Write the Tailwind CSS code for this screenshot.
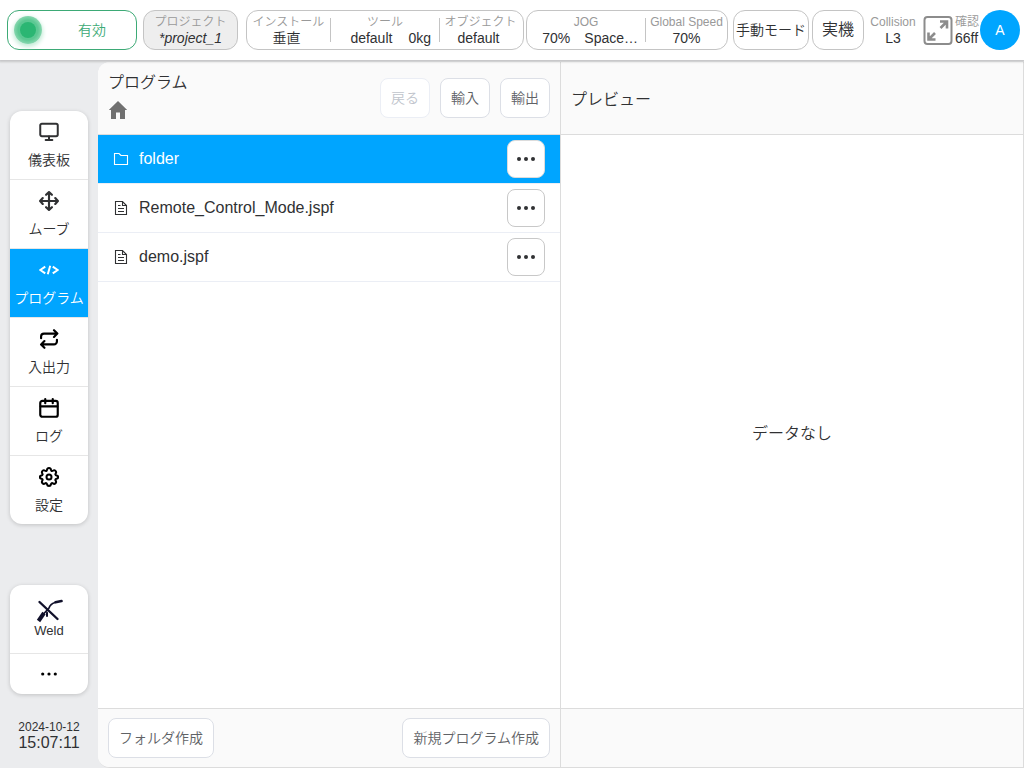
<!DOCTYPE html>
<html lang="ja">
<head>
    <meta charset="UTF-8">
    <meta name="viewport" content="width=device-width, initial-scale=1.0">
    <title>プログラム</title>
    <script src="https://cdn.jsdelivr.net/npm/@tailwindcss/browser@4"></script>
</head>
<body class="flex h-screen flex-col overflow-hidden bg-[#ebecee] font-['Liberation_Sans','Noto_Sans_CJK_JP',sans-serif] text-sm font-[350] text-[#303133]">
    <!-- top bar -->
    <header class="relative z-10 flex h-[60px] shrink-0 items-center bg-white pl-[7px] pr-1 leading-4 whitespace-nowrap shadow-[0_1px_2px_1px_rgba(0,0,0,0.16)]">
        <button class="flex h-10 w-[130px] items-center rounded-xl border border-[#3daa76] pl-1.5 text-[#3daa76]">
            <span class="flex size-7 items-center justify-center rounded-full bg-radial from-[#5cc893] from-50% to-[#8fdab5] to-75% shadow-[0_2px_4px_1px_#c5ecd8]">
                <span class="size-4 rounded-full bg-[#2bb673]"></span>
            </span>
            <span class="flex-1 pl-1.5">有効</span>
        </button>
        <button class="ml-1.5 h-10 w-[95px] rounded-xl border border-[#c4c4c4] bg-[#eeeeee] text-center">
            <span class="block text-xs leading-4 text-[#999999]">プロジェクト</span>
            <span class="block leading-4 italic">*project_1</span>
        </button>
        <div class="ml-2 flex h-10 w-[278px] items-center rounded-xl border border-[#c4c4c4] text-center">
            <div class="w-[83px]">
                <div class="text-xs leading-4 text-[#999999]">インストール</div>
                <div class="pr-1">垂直</div>
            </div>
            <div class="h-6 w-px bg-[#c4c4c4]"></div>
            <div class="w-[108px]">
                <div class="text-xs leading-4 text-[#999999]">ツール</div>
                <div class="flex justify-end gap-4 pr-2"><span>default</span><span>0kg</span></div>
            </div>
            <div class="h-6 w-px bg-[#c4c4c4]"></div>
            <div class="flex-1 pr-0.5">
                <div class="text-xs leading-4 text-[#999999]">オブジェクト</div>
                <div class="pr-1">default</div>
            </div>
        </div>
        <div class="ml-0.5 flex h-10 w-[202px] items-center rounded-xl border border-[#c4c4c4] text-center">
            <div class="w-[118px]">
                <div class="text-xs leading-4 text-[#999999]">JOG</div>
                <div class="flex justify-end gap-3.5 pr-[7px]"><span>70%</span><span>Space…</span></div>
            </div>
            <div class="h-6 w-px bg-[#c4c4c4]"></div>
            <div class="flex-1">
                <div class="text-xs leading-4 text-[#999999]">Global Speed</div>
                <div>70%</div>
            </div>
        </div>
        <button class="ml-[5px] h-10 w-[76px] rounded-xl border border-[#c4c4c4]">手動モード</button>
        <button class="ml-[3px] h-10 w-[52px] rounded-xl border border-[#c4c4c4] text-base">実機</button>
        <div class="ml-1.5 w-[46px] text-center">
            <div class="text-xs leading-4 text-[#999999]">Collision</div>
            <div>L3</div>
        </div>
        <button class="ml-[7px]" aria-label="全画面">
            <svg class="size-[30px]" viewBox="0 0 30 30" fill="none" stroke="#8c8c8c" stroke-width="2">
                <rect x="1.500" y="2" width="27" height="27" rx="3"/>
                <path d="M17 6.500h7v7M24 6.500l-6.500 6.500M5.500 17.500v7h7M5.500 24.500l6.500-6.500" stroke-width="2.600"/>
            </svg>
        </button>
        <div class="ml-0.5 w-6">
            <div class="text-xs leading-4 text-[#999999]">確認</div>
            <div>66ff</div>
        </div>
        <button class="ml-auto size-10 shrink-0 rounded-full bg-[#00a5ff] text-white">A</button>
    </header>

    <div class="flex min-h-0 flex-1 pt-0.5">
        <!-- side menu -->
        <aside class="flex w-[98px] shrink-0 flex-col items-center text-center">
            <nav class="mt-[49px] w-[78px] divide-y divide-[#e6e6e6] overflow-hidden rounded-xl bg-white leading-5 shadow-[0_1px_4px_rgba(0,0,0,0.18)]">
                <a href="#" class="flex h-[69px] flex-col items-center gap-2 pt-[11px]">
                    <svg class="size-5" viewBox="0 0 24 24" fill="none" stroke="currentColor" stroke-width="2.400" stroke-linecap="round" stroke-linejoin="round"><rect x="1.500" y="2" width="21" height="15" rx="2"/><path d="M12 17.500v4M8 21.500h8"/></svg>
                    儀表板
                </a>
                <a href="#" class="flex h-[69px] flex-col items-center gap-2 pt-[11px]">
                    <svg class="size-5" viewBox="0 0 24 24" fill="none" stroke="currentColor" stroke-width="2.600" stroke-linecap="round" stroke-linejoin="round"><path d="M12 1.500v21M1.500 12h21M8.500 4.500 12 1.300l3.500 3.200M8.500 19.500 12 22.700l3.500-3.200M4.500 8.500 1.300 12l3.200 3.500M19.500 8.500l3.200 3.500-3.200 3.500"/></svg>
                    ムーブ
                </a>
                <a href="#" class="flex h-[69px] flex-col items-center gap-2 bg-[#00a5ff] pt-[11px] text-white">
                    <svg class="size-5" viewBox="0 0 24 24" fill="none" stroke="currentColor" stroke-width="2.400"><path d="M7.500 8 1.500 12l6 4M16.500 8l6 4-6 4M13.500 7l-3 10"/></svg>
                    プログラム
                </a>
                <a href="#" class="flex h-[69px] flex-col items-center gap-2 pt-[11px]">
                    <svg class="size-5" viewBox="0 0 24 24" fill="none" stroke="#000" stroke-width="2.600" stroke-linecap="round" stroke-linejoin="round"><path d="m18 1.500 4 4-4 4M2.500 11V9A3.500 3.500 0 0 1 6 5.500h15M6.500 22.500l-4-4 4-4M21.500 13v2a3.500 3.500 0 0 1-3.500 3.500H3"/></svg>
                    入出力
                </a>
                <a href="#" class="flex h-[69px] flex-col items-center gap-2 pt-[11px]">
                    <svg class="size-5" viewBox="0 0 24 24" fill="none" stroke="#000" stroke-width="2.600" stroke-linecap="round" stroke-linejoin="round"><rect x="1.500" y="3.500" width="21" height="19" rx="2.500"/><path d="M2 10h20M7.500 1.300v5M16.500 1.300v5"/></svg>
                    ログ
                </a>
                <a href="#" class="flex h-[68px] flex-col items-center gap-2 pt-[11px]">
                    <svg class="size-5" viewBox="0 0 24 24" fill="none" stroke="#000" stroke-width="2.400" stroke-linejoin="round"><circle cx="12" cy="12" r="3"/><path d="M12 1.300c1.800 0 2.200.8 2.400 2.200.2 1.300 1.300 1.700 2.300 1 1.200-.8 2-.9 3.100.2s1 2 .2 3.100c-.7 1-.3 2.100 1 2.300 1.300.2 2 .6 2 2s-.7 1.800-2 2c-1.300.2-1.700 1.300-1 2.300.8 1.200.9 2-.2 3.100s-2 1-3.100.2c-1-.7-2.100-.3-2.300 1-.2 1.300-.6 2-2.400 2s-2.200-.7-2.400-2c-.2-1.300-1.300-1.700-2.300-1-1.200.8-2 .9-3.100-.2s-1-2-.2-3.100c.7-1 .3-2.100-1-2.300-1.300-.2-2-.6-2-2s.7-1.800 2-2c1.300-.2 1.700-1.300 1-2.300-.8-1.200-.9-2 .2-3.100s2-1 3.100-.2c1 .7 2.100.3 2.300-1 .2-1.400.6-2.200 2.400-2.200z"/></svg>
                    設定
                </a>
            </nav>
            <nav class="mt-[61px] w-[78px] divide-y divide-[#e6e6e6] rounded-xl bg-white shadow-[0_1px_4px_rgba(0,0,0,0.18)]">
                <a href="#" class="flex h-[69px] flex-col items-center pt-3 leading-4">
                    <svg class="h-[26px] w-7" viewBox="0 0 28 26" fill="none" stroke="#11112b" stroke-linecap="round"><path d="m4.500 5 18 17" stroke-width="2.400"/><path d="M3.500 24 9 16" stroke-width="4" stroke-linecap="butt"/><path d="M8 17.500 14 11C15 8 17 6.500 20 5.500" stroke-width="1.700"/><path d="m20.500 5.300 6-1.300" stroke-width="2.600"/><path d="M12 19v-3.500" stroke-width="2"/></svg>
                    <span class="text-[13px] leading-4">Weld</span>
                </a>
                <button class="flex h-10 w-full items-center justify-center" aria-label="その他">
                    <svg class="h-1 w-4" viewBox="0 0 16 4"><circle cx="1.700" cy="2" r="1.600"/><circle cx="8" cy="2" r="1.600"/><circle cx="14.300" cy="2" r="1.600"/></svg>
                </button>
            </nav>
            <div class="mt-auto pb-[17px]">
                <div class="text-xs leading-4">2024-10-12</div>
                <div class="text-base leading-4">15:07:11</div>
            </div>
        </aside>

        <main class="flex min-w-0 flex-1 overflow-hidden rounded-l-xl border-r border-b border-[#dcdcdc] bg-white">
            <section class="flex flex-1 flex-col border-r border-[#dcdcdc]">
                <div class="flex h-[73px] shrink-0 justify-between border-b border-[#dcdcdc] bg-[#fafafa] px-2.5">
                    <div class="pt-[9px]">
                        <h1 class="text-base leading-6">プログラム</h1>
                        <button class="mt-[5px] block" aria-label="ホーム">
                            <svg class="size-5" viewBox="0 0 20 20" fill="#707070"><path d="M10 1 .8 10H3v9h5v-6.500h4V19h5v-9h2.200z"/></svg>
                        </button>
                    </div>
                    <div class="flex gap-2.5 pt-4 text-[#606266]">
                        <button class="h-10 w-[50px] rounded-lg border border-[#ebeef5] bg-white text-[#c0c4cc]" disabled>戻る</button>
                        <button class="h-10 w-[50px] rounded-lg border border-[#dcdfe6] bg-white">輸入</button>
                        <button class="h-10 w-[50px] rounded-lg border border-[#dcdfe6] bg-white">輸出</button>
                    </div>
                </div>
                <ul class="flex-1 text-base">
                    <li class="flex h-[49px] items-center border-b border-[#ebeef5] bg-[#00a5ff] px-[15px] text-white">
                        <svg class="size-4" viewBox="0 0 16 16" fill="none" stroke="currentColor" stroke-width="1.100"><path d="M1.500 2.500H6L8 4.500h6.500v9h-13z"/></svg>
                        <span class="flex-1 pl-2.5">folder</span>
                        <button class="flex size-[38px] items-center justify-center rounded-lg border border-[#dcdcdc] bg-white" aria-label="メニュー">
                            <svg class="h-1 w-[18px]" viewBox="0 0 18 4" fill="#303133"><circle cx="2" cy="2" r="2"/><circle cx="9" cy="2" r="2"/><circle cx="16" cy="2" r="2"/></svg>
                        </button>
                    </li>
                    <li class="flex h-[49px] items-center border-b border-[#ebeef5] px-[15px]">
                        <svg class="size-4" viewBox="0 0 16 16" fill="none" stroke="currentColor" stroke-width="1.100"><path d="M2.500 1.500h7l4 4v9h-11zM9.500 1.500v4h4M5 5.500h2.500M5 8.500h6M5 11.500h6"/></svg>
                        <span class="flex-1 pl-2.5">Remote_Control_Mode.jspf</span>
                        <button class="flex size-[38px] items-center justify-center rounded-lg border border-[#c8c8c8] bg-white" aria-label="メニュー">
                            <svg class="h-1 w-[18px]" viewBox="0 0 18 4" fill="#303133"><circle cx="2" cy="2" r="2"/><circle cx="9" cy="2" r="2"/><circle cx="16" cy="2" r="2"/></svg>
                        </button>
                    </li>
                    <li class="flex h-[49px] items-center border-b border-[#ebeef5] px-[15px]">
                        <svg class="size-4" viewBox="0 0 16 16" fill="none" stroke="currentColor" stroke-width="1.100"><path d="M2.500 1.500h7l4 4v9h-11zM9.500 1.500v4h4M5 5.500h2.500M5 8.500h6M5 11.500h6"/></svg>
                        <span class="flex-1 pl-2.5">demo.jspf</span>
                        <button class="flex size-[38px] items-center justify-center rounded-lg border border-[#c8c8c8] bg-white" aria-label="メニュー">
                            <svg class="h-1 w-[18px]" viewBox="0 0 18 4" fill="#303133"><circle cx="2" cy="2" r="2"/><circle cx="9" cy="2" r="2"/><circle cx="16" cy="2" r="2"/></svg>
                        </button>
                    </li>
                </ul>
                <div class="flex h-[59px] shrink-0 items-center justify-between border-t border-[#dcdcdc] bg-[#fafafa] px-2.5 text-[#606266]">
                    <button class="h-10 rounded-lg border border-[#dcdfe6] bg-white px-2.5">フォルダ作成</button>
                    <button class="h-10 rounded-lg border border-[#dcdfe6] bg-white px-2.5">新規プログラム作成</button>
                </div>
            </section>
            <section class="flex flex-1 flex-col text-base">
                <h2 class="flex h-[73px] shrink-0 items-center border-b border-[#dcdcdc] bg-[#fafafa] px-2.5 pt-1">プレビュー</h2>
                <div class="flex flex-1 items-center justify-center pt-6">
                    <p>データなし</p>
                </div>
                <div class="h-[59px] shrink-0 border-t border-[#dcdcdc] bg-[#fafafa]"></div>
            </section>
        </main>
    </div>
</body>
</html>
